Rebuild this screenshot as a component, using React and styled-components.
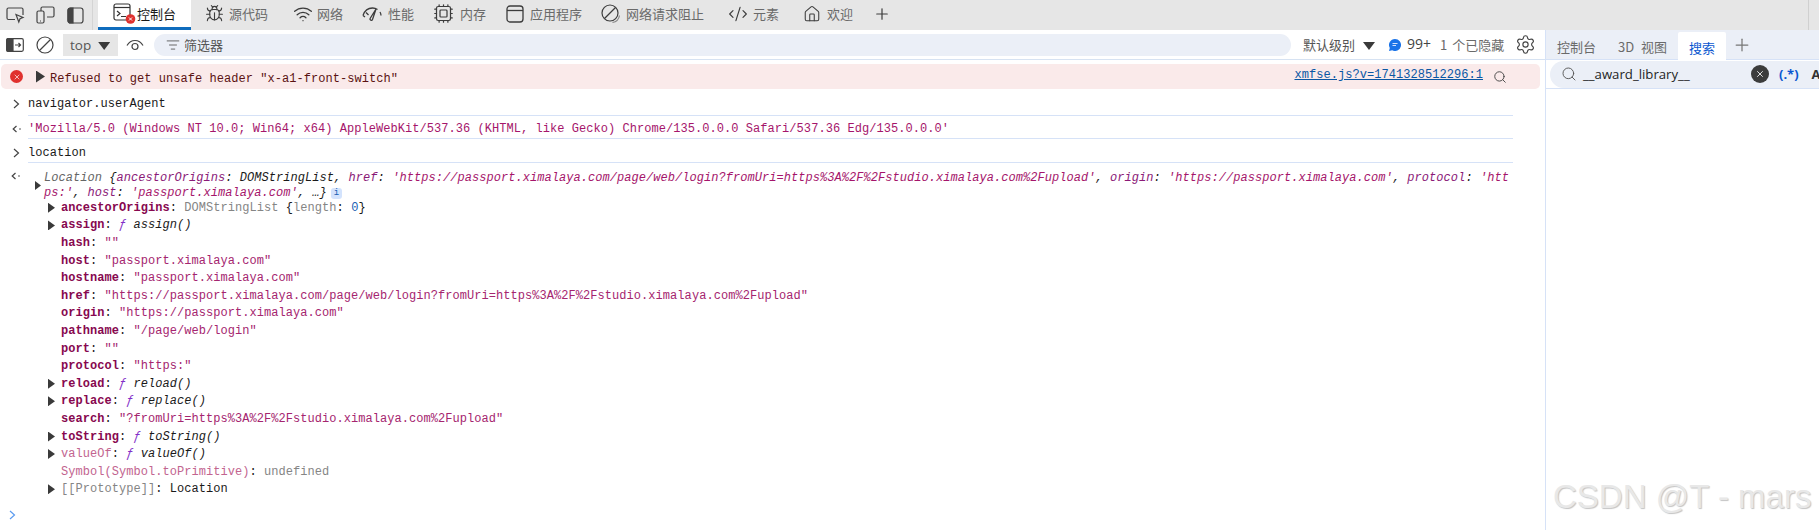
import React from 'react';
import styled, { createGlobalStyle } from 'styled-components';
import { Bug, Wifi, Cpu, CodeXml, House, Plus, ListFilter, Settings, Search, X } from 'lucide-react';

const GlobalStyle = createGlobalStyle`
  html, body {
    margin: 0;
    padding: 0;
    background: #fff;
  }
`;

const Page = styled.div`
  position: relative;
  width: 1819px;
  height: 530px;
  overflow: hidden;
  background: #fff;
  font-family: "Open Sans", "Noto Sans CJK SC", sans-serif;
  font-size: 13px;
`;

/* top tab strip */
const TabBar = styled.div`
  display: flex;
  align-items: stretch;
  height: 30px;
  background: #e6e6e6;
  padding-left: 6px;
`;

const StripButton = styled.div`
  display: flex;
  align-items: center;
  margin-right: ${(p) => p.$mr || 12}px;
  color: #444;
`;

const Divider = styled.div`
  width: 1px;
  height: 30px;
  background: #d4d4d4;
  margin-right: 5px;
`;

const Tab = styled.div`
  display: flex;
  align-items: center;
  gap: ${(p) => (p.$gap === undefined ? 6 : p.$gap)}px;
  margin-left: ${(p) => p.$ml || 0}px;
  padding-bottom: 3px;
  box-sizing: border-box;
  color: #6a6a6a;
  white-space: nowrap;
  font-family: "Noto Sans CJK SC", sans-serif;
  svg { color: #3c3c3c; flex: none; }
`;

const ActiveTab = styled(Tab)`
  width: 93px;
  padding-left: 15px;
  background: #fff;
  color: #1a1a1a;
  border-bottom: 3px solid #0f6cbd;
  padding-bottom: 0;
`;

const StripEnd = styled.div`
  margin-left: auto;
  margin-right: 10px;
  width: 1px;
  background: #d0d0d0;
`;

/* panes */
const Panes = styled.div`
  display: flex;
  height: 500px;
`;

const LeftPane = styled.div`
  width: 1545px;
  flex: none;
  border-right: 1px solid #d6e2f7;
`;

const RightPane = styled.div`
  flex: 1;
  min-width: 0;
  overflow: hidden;
`;

/* console toolbar */
const Toolbar = styled.div`
  display: flex;
  align-items: center;
  height: 29px;
  border-bottom: 1px solid #d6e2f2;
  padding-left: 6px;
  color: #555;
  font-family: "Noto Sans CJK SC", sans-serif;
`;

const ToolIcon = styled.div`
  display: flex;
  align-items: center;
  flex: none;
  margin-right: ${(p) => p.$mr || 0}px;
  color: #444;
`;

const ContextSelect = styled.div`
  display: flex;
  align-items: center;
  width: 55px;
  height: 22px;
  box-sizing: border-box;
  padding-left: 7px;
  gap: 7px;
  margin-right: 8px;
  background: #e6e6e6;
  color: #555;
  font-family: "Open Sans", sans-serif;
  font-size: 13.5px;
`;

const Caret = styled.span`
  display: inline-block;
  width: 12px;
  height: 8px;
  background: #3a3a3a;
  clip-path: polygon(0 0, 100% 0, 50% 100%);
  margin-top: 3px;
`;

const FilterBox = styled.div`
  display: flex;
  align-items: center;
  width: 1137px;
  height: 22px;
  box-sizing: border-box;
  padding-left: 12px;
  gap: 4px;
  margin-right: 12px;
  border-radius: 11px;
  background: #ebeff7;
  color: #555;
  svg { color: #555; }
`;

const Level = styled.span`
  color: #555;
  margin-right: 8px;
  white-space: nowrap;
`;

const Count = styled.span`
  font-family: "Open Sans", sans-serif;
  font-size: 14px;
  color: #444;
  margin: -3px 9px 0 6px;
  white-space: nowrap;
`;

const Hidden = styled.span`
  color: #6a6a6a;
  margin-right: 11px;
  word-spacing: 2px;
  white-space: nowrap;
`;

/* console output */
const Messages = styled.div`
  width: 1513px;
  font-family: "Liberation Mono", monospace;
  font-size: 12px;
  letter-spacing: 0.05px;
  color: #1a1a1a;
`;

const ErrorRow = styled.div`
  display: flex;
  align-items: center;
  width: 1539px;
  height: 25px;
  margin: 4px 0 0 1px;
  box-sizing: border-box;
  padding: 0 33px 0 9px;
  border-radius: 5px;
  background: #faeaea;
  color: #5b1212;
`;

const ErrorBadge = styled.span`
  display: flex;
  align-items: center;
  justify-content: center;
  width: 13px;
  height: 13px;
  margin: 0 13px 0 0;
  border-radius: 50%;
  background: #e0312e;
  color: #fff;
`;

const Arrow = styled.span`
  display: inline-block;
  flex: none;
  width: ${(p) => p.$w || 6}px;
  height: ${(p) => p.$h || 9}px;
  background: #3a3a3a;
  clip-path: polygon(0 0, 100% 50%, 0 100%);
`;

const ErrorText = styled.span`
  margin-left: 5px;
  margin-top: 5px;
  flex: 1;
  white-space: nowrap;
`;

const SourceLink = styled.span`
  color: #0b57a4;
  text-decoration: underline;
  margin-top: -3px;
  margin-right: 10px;
  white-space: nowrap;
`;

const MessageRow = styled.div`
  display: flex;
  align-items: center;
  height: ${(p) => p.$h}px;
`;

const Gutter = styled.div`
  display: flex;
  align-items: center;
  justify-content: center;
  flex: none;
  width: 28px;
  box-sizing: border-box;
  padding: 3px 0 0 5px;
  height: 100%;
  color: #444;
`;

const MessageBody = styled.div`
  display: flex;
  align-items: center;
  flex: 1;
  height: 100%;
  box-sizing: border-box;
  padding-top: 4px;
  border-bottom: 1px solid #d6e2f7;
  white-space: pre;
`;

const ResultString = styled.span`
  color: #a5156b;
`;

const ObjectBlock = styled.div`
  display: flex;
  padding-top: 8px;
`;

const ObjectGutter = styled.div`
  flex: none;
  width: 35px;
  box-sizing: border-box;
  padding: 1px 0 0 11px;
  display: flex;
  justify-content: flex-start;
  color: #444;
`;

const ObjectArrow = styled.div`
  flex: none;
  width: 9px;
  padding-top: 9px;
`;

const ObjectPreview = styled.div`
  width: 1468px;
  line-height: 15px;
  font-style: italic;
  word-break: break-all;
  color: #1a1a1a;
`;

const InfoBadge = styled.span`
  display: inline-block;
  width: 11px;
  height: 11px;
  margin-left: 4px;
  border-radius: 3px;
  background: #d3e3fd;
  color: #1a5fb4;
  font-size: 9px;
  font-style: normal;
  line-height: 11px;
  text-align: center;
  vertical-align: 1px;
`;

const PreviewName = styled.span`
  color: #666;
`;

const PreviewKey = styled.span`
  color: #8b1a78;
`;

const PreviewValue = styled.span`
  color: #a5156b;
`;

const PropList = styled.div`
  margin-top: -2px;
`;

const PropRow = styled.div`
  display: flex;
  align-items: center;
  height: 17.6px;
  padding-left: 48px;
  white-space: pre;
`;

const PropArrowSlot = styled.div`
  flex: none;
  width: 13px;
  display: flex;
  align-items: center;
`;

const PropKey = styled.span`
  color: ${(p) => (p.$dim ? '#c2648f' : '#87084f')};
  font-weight: ${(p) => (p.$dim ? 400 : 700)};
`;

const PropGray = styled.span`
  color: #858585;
`;

const PropStr = styled.span`
  color: #a5256f;
`;

const PropNum = styled.span`
  color: #1a5fb4;
`;

const FnMark = styled.span`
  color: #8430c8;
  font-style: italic;
`;

const FnName = styled.span`
  font-style: italic;
`;

const PromptRow = styled.div`
  display: flex;
  align-items: center;
  margin: 12px 0 0 9px;
  color: #5b9bf0;
`;

/* drawer on the right */
const DrawerTabs = styled.div`
  display: flex;
  align-items: flex-end;
  height: 29px;
  border-bottom: 1px solid #d6e2f7;
  background: #ebeff7;
  font-family: "Noto Sans CJK SC", "Open Sans", sans-serif;
  color: #6a6a6a;
`;

const DrawerTab = styled.div`
  display: flex;
  align-items: center;
  height: 28px;
  padding: 3px 11px 0;
  box-sizing: border-box;
  margin-bottom: ${(p) => (p.$active ? -1 : 0)}px;
  white-space: nowrap;
  word-spacing: 4px;
  background: ${(p) => (p.$active ? '#fff' : 'transparent')};
  color: ${(p) => (p.$active ? '#0b57d0' : '#6a6a6a')};
  border-radius: ${(p) => (p.$active ? '2px 2px 0 0' : 0)};
`;

const DrawerPlus = styled.div`
  display: flex;
  align-items: center;
  height: 100%;
  margin-left: 6px;
  color: #777;
`;

const SearchRow = styled.div`
  display: flex;
  align-items: center;
  height: 29px;
  box-sizing: border-box;
  padding-left: 4px;
  border-bottom: 1px solid #d6e2f7;
`;

const SearchPill = styled.div`
  display: flex;
  align-items: center;
  width: 300px;
  height: 27px;
  flex: none;
  box-sizing: border-box;
  padding-left: 11px;
  border-radius: 14px 0 0 14px;
  background: #ebeff7;
  color: #1f1f1f;
  svg { color: #555; flex: none; }
`;

const SearchText = styled.span`
  width: 168px;
  margin-left: 6px;
  flex: none;
  font-size: 13.2px;
`;

const ClearButton = styled.span`
  display: flex;
  align-items: center;
  justify-content: center;
  width: 18px;
  height: 18px;
  flex: none;
  border-radius: 50%;
  background: #3c3c3c;
  color: #fff;
  svg { color: #fff; }
`;

const RegexToggle = styled.span`
  margin-left: 10px;
  font-weight: 700;
  color: #0b57d0;
  white-space: nowrap;
`;

const CaseToggle = styled.span`
  margin-left: 13px;
  font-weight: 700;
  color: #333;
`;

const Watermark = styled.div`
  position: absolute;
  left: 1553px;
  top: 475px;
  font-family: "Liberation Sans", sans-serif;
  font-size: 33px;
  line-height: 44px;
  white-space: nowrap;
  color: #e8e8e8;
  text-shadow: 1px 1px 1px #c4c4c4;
`;

/* icons that no package has in this shape */
const InspectIcon = () => (
  <svg width="19" height="18" viewBox="0 0 19 18" fill="none" stroke="currentColor" strokeWidth="1.2">
    <path d="M9 13.5H2.5a1.5 1.5 0 0 1-1.5-1.5V3.5A1.5 1.5 0 0 1 2.5 2h13A1.5 1.5 0 0 1 17 3.5V9" />
    <path d="M10 8.5l7 3-3 1.2-1.2 3.3z" />
  </svg>
);

const DeviceIcon = () => (
  <svg width="19" height="18" viewBox="0 0 19 18" fill="none" stroke="currentColor" strokeWidth="1.2">
    <path d="M5 5V2.5A1.5 1.5 0 0 1 6.5 1h10A1.5 1.5 0 0 1 18 2.5v7a1.5 1.5 0 0 1-1.5 1.5H11" />
    <rect x="1" y="5" width="7" height="12" rx="1.5" />
    <path d="M4 15h1" />
  </svg>
);

const DockIcon = () => (
  <svg width="17" height="17" viewBox="0 0 17 17" fill="none" stroke="currentColor" strokeWidth="1.2">
    <rect x="1" y="1" width="15" height="15" rx="2.5" />
    <path d="M3.5 1H6v15H3.5A2.5 2.5 0 0 1 1 13.5v-10A2.5 2.5 0 0 1 3.5 1z" fill="currentColor" />
  </svg>
);

const ConsoleIcon = () => (
  <svg width="24" height="22" viewBox="0 0 24 22" fill="none" stroke="#333" strokeWidth="1.2">
    <rect x="1" y="1" width="16" height="16" rx="2" />
    <path d="M1 4.5h16" />
    <path d="M4 8l3 2.5L4 13M8 13.5h5" />
    <circle cx="17.5" cy="16" r="4.8" fill="#e0312e" stroke="none" />
    <path d="M16 14.5l3 3M19 14.5l-3 3" stroke="#fff" strokeWidth="1" />
  </svg>
);

const GaugeIcon = () => (
  <svg width="20" height="16" viewBox="0 0 20 16" fill="none" stroke="currentColor" strokeWidth="1.3">
    <path d="M1 9.5C2.5 5 6 2 10.5 2c2 0 3.5.5 5 1.5" />
    <path d="M4 6.5L6.5 9M1 9.5l2 1.5M18 6c.7 1.2 1 2.3 1 3.5" />
    <path d="M14 3L10.5 13.5a1.3 1.3 0 0 1-2.4-1z" />
  </svg>
);

const AppIcon = () => (
  <svg width="18" height="18" viewBox="0 0 18 18" fill="none" stroke="currentColor" strokeWidth="1.3">
    <rect x="1" y="1" width="16" height="16" rx="3" />
    <path d="M1 5.5h16" />
  </svg>
);

const BlockIcon = () => (
  <svg width="20" height="20" viewBox="0 0 20 20" fill="none" stroke="currentColor" strokeWidth="1.2">
    <circle cx="9" cy="9" r="8" />
    <path d="M14.5 3.5l-11 11" />
    <path d="M18.5 11.5a8.5 8.5 0 0 1-7 7" stroke="#888" />
  </svg>
);

const PanelToggleIcon = () => (
  <svg width="18" height="14" viewBox="0 0 18 14" fill="none" stroke="currentColor" strokeWidth="1.2">
    <rect x="0.7" y="0.7" width="16.6" height="12.6" rx="1.5" />
    <path d="M2 .7h5v12.6H2A1.3 1.3 0 0 1 .7 12V2A1.3 1.3 0 0 1 2 .7z" fill="currentColor" />
    <path d="M9 7h5.5M12.5 5l2 2-2 2" />
  </svg>
);

const ClearIcon = () => (
  <svg width="18" height="18" viewBox="0 0 18 18" fill="none" stroke="currentColor" strokeWidth="1.2">
    <circle cx="9" cy="9" r="8" />
    <path d="M14.5 3.5l-11 11" />
  </svg>
);

const EyeIcon = () => (
  <svg width="18" height="12" viewBox="0 0 18 12" fill="none" stroke="currentColor" strokeWidth="1.2">
    <path d="M1 6.5C3 3 5.8 1.5 9 1.5S15 3 17 6.5" />
    <circle cx="9" cy="7.5" r="3" />
  </svg>
);

const ChatIcon = () => (
  <svg width="12" height="12" viewBox="0 0 12 12">
    <path d="M6 0a6 6 0 1 1-2.8 11.3L0 12l.8-3A6 6 0 0 1 6 0z" fill="#1a73e8" />
    <path d="M3.5 4.5h5M3.5 6.5H7" stroke="#d3e3fd" strokeWidth="1" />
  </svg>
);

const ReturnIcon = () => (
  <svg width="10" height="8" viewBox="0 0 10 8" fill="none" stroke="currentColor" strokeWidth="1.2">
    <path d="M4.5 1L1.2 4l3.3 3" />
    <circle cx="8" cy="4" r="0.8" fill="currentColor" stroke="none" />
  </svg>
);

const ChevronIcon = () => (
  <svg width="7" height="10" viewBox="0 0 7 10" fill="none" stroke="currentColor" strokeWidth="1.2">
    <path d="M1 1l4.5 4L1 9" />
  </svg>
);

const props = [
  { key: 'ancestorOrigins', arrow: true, value: <span><PropGray>DOMStringList</PropGray> {'{'}<PropGray>length</PropGray>: <PropNum>0</PropNum>{'}'}</span> },
  { key: 'assign', arrow: true, fn: 'assign()' },
  { key: 'hash', str: '""' },
  { key: 'host', str: '"passport.ximalaya.com"' },
  { key: 'hostname', str: '"passport.ximalaya.com"' },
  { key: 'href', str: '"https://passport.ximalaya.com/page/web/login?fromUri=https%3A%2F%2Fstudio.ximalaya.com%2Fupload"' },
  { key: 'origin', str: '"https://passport.ximalaya.com"' },
  { key: 'pathname', str: '"/page/web/login"' },
  { key: 'port', str: '""' },
  { key: 'protocol', str: '"https:"' },
  { key: 'reload', arrow: true, fn: 'reload()' },
  { key: 'replace', arrow: true, fn: 'replace()' },
  { key: 'search', str: '"?fromUri=https%3A%2F%2Fstudio.ximalaya.com%2Fupload"' },
  { key: 'toString', arrow: true, fn: 'toString()' },
  { key: 'valueOf', arrow: true, dim: true, fn: 'valueOf()' },
  { key: 'Symbol(Symbol.toPrimitive)', dim: true, value: <PropGray>undefined</PropGray> },
  { key: '[[Prototype]]', arrow: true, gray: true, value: <span>Location</span> },
];

const userAgent = "'Mozilla/5.0 (Windows NT 10.0; Win64; x64) AppleWebKit/537.36 (KHTML, like Gecko) Chrome/135.0.0.0 Safari/537.36 Edg/135.0.0.0'";

const App = () => (
  <Page>
    <GlobalStyle />
    <TabBar>
      <StripButton $mr={11}><InspectIcon /></StripButton>
      <StripButton $mr={12}><DeviceIcon /></StripButton>
      <StripButton $mr={8}><DockIcon /></StripButton>
      <Divider />
      <ActiveTab $gap={0}><ConsoleIcon />控制台</ActiveTab>
      <Tab $ml={14} $gap={5}><Bug size={19} strokeWidth={1.4} />源代码</Tab>
      <Tab $ml={25} $gap={4}><Wifi size={20} strokeWidth={1.6} />网络</Tab>
      <Tab $ml={19}><GaugeIcon />性能</Tab>
      <Tab $ml={19} $gap={6}><Cpu size={21} strokeWidth={1.4} />内存</Tab>
      <Tab $ml={20}><AppIcon />应用程序</Tab>
      <Tab $ml={19} $gap={5}><BlockIcon />网络请求阻止</Tab>
      <Tab $ml={24} $gap={5}><CodeXml size={20} strokeWidth={1.4} />元素</Tab>
      <Tab $ml={24} $gap={6}><House size={18} strokeWidth={1.4} />欢迎</Tab>
      <Tab $ml={20}><Plus size={18} strokeWidth={1.6} /></Tab>
      <StripEnd />
    </TabBar>
    <Panes>
      <LeftPane>
        <Toolbar>
          <ToolIcon $mr={12}><PanelToggleIcon /></ToolIcon>
          <ToolIcon $mr={9}><ClearIcon /></ToolIcon>
          <ContextSelect>top<Caret /></ContextSelect>
          <ToolIcon $mr={10}><EyeIcon /></ToolIcon>
          <FilterBox><ListFilter size={14} strokeWidth={1.5} />筛选器</FilterBox>
          <Level>默认级别</Level>
          <ToolIcon $mr={14}><Caret /></ToolIcon>
          <ToolIcon><ChatIcon /></ToolIcon>
          <Count>99+</Count>
          <Hidden>1 个已隐藏</Hidden>
          <ToolIcon><Settings size={21} strokeWidth={1.3} /></ToolIcon>
        </Toolbar>
        <Messages>
          <ErrorRow>
            <ErrorBadge><X size={8} strokeWidth={2} /></ErrorBadge>
            <Arrow $w={9} $h={12} />
            <ErrorText>Refused to get unsafe header "x-a1-front-switch"</ErrorText>
            <SourceLink>xmfse.js?v=1741328512296:1</SourceLink>
            <ToolIcon><Search size={14} strokeWidth={1.6} /></ToolIcon>
          </ErrorRow>
          <MessageRow $h={27}>
            <Gutter><ChevronIcon /></Gutter>
            <MessageBody>navigator.userAgent</MessageBody>
          </MessageRow>
          <MessageRow $h={23}>
            <Gutter><ReturnIcon /></Gutter>
            <MessageBody><ResultString>{userAgent}</ResultString></MessageBody>
          </MessageRow>
          <MessageRow $h={24}>
            <Gutter><ChevronIcon /></Gutter>
            <MessageBody>location</MessageBody>
          </MessageRow>
          <ObjectBlock>
            <ObjectGutter><ReturnIcon /></ObjectGutter>
            <ObjectArrow><Arrow $w={6} $h={9} /></ObjectArrow>
            <ObjectPreview>
              <PreviewName>Location </PreviewName>{'{'}<PreviewKey>ancestorOrigins</PreviewKey>: DOMStringList, <PreviewKey>href</PreviewKey>: <PreviewValue>'https://passport.ximalaya.com/page/web/login?fromUri=https%3A%2F%2Fstudio.ximalaya.com%2Fupload'</PreviewValue>, <PreviewKey>origin</PreviewKey>: <PreviewValue>'https://passport.ximalaya.com'</PreviewValue>, <PreviewKey>protocol</PreviewKey>: <PreviewValue>'https:'</PreviewValue>, <PreviewKey>host</PreviewKey>: <PreviewValue>'passport.ximalaya.com'</PreviewValue>, …{'}'}
              <InfoBadge>i</InfoBadge>
            </ObjectPreview>
          </ObjectBlock>
          <PropList>
            {props.map((p) => (
              <PropRow key={p.key}>
                <PropArrowSlot>{p.arrow && <Arrow $w={7} $h={10} />}</PropArrowSlot>
                {p.gray ? <PropGray>{p.key}</PropGray> : <PropKey $dim={p.dim}>{p.key}</PropKey>}
                <span>: </span>
                {p.str && <PropStr>{p.str}</PropStr>}
                {p.fn && <span><FnMark>ƒ</FnMark> <FnName>{p.fn}</FnName></span>}
                {p.value}
              </PropRow>
            ))}
          </PropList>
          <PromptRow><ChevronIcon /></PromptRow>
        </Messages>
      </LeftPane>
      <RightPane>
        <DrawerTabs>
          <DrawerTab>控制台</DrawerTab>
          <DrawerTab>3D 视图</DrawerTab>
          <DrawerTab $active>搜索</DrawerTab>
          <DrawerPlus><Plus size={20} strokeWidth={1.5} /></DrawerPlus>
        </DrawerTabs>
        <SearchRow>
          <SearchPill>
            <Search size={16} strokeWidth={1.4} />
            <SearchText>__award_library__</SearchText>
            <ClearButton><X size={10} strokeWidth={2} /></ClearButton>
            <RegexToggle>(.*)</RegexToggle>
            <CaseToggle>A</CaseToggle>
          </SearchPill>
        </SearchRow>
      </RightPane>
    </Panes>
    <Watermark>CSDN @T - mars</Watermark>
  </Page>
);

export default App;
